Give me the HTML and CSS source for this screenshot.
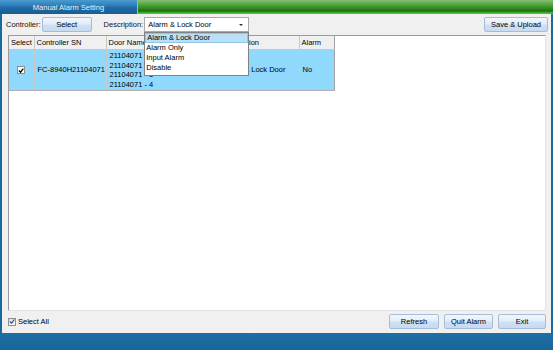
FILE: index.html
```html
<!DOCTYPE html>
<html>
<head>
<meta charset="utf-8">
<title>Manual Alarm Setting</title>
<link rel="stylesheet" href="styles.css">
</head>
<body>
<div class="app">
  <div class="titlebar">
    <div class="tab">Manual Alarm Setting</div>
    <div class="green"></div>
  </div>
  <div class="main">
    <div class="edge"></div>
    <div class="content">
      <div class="toolbar">
        <span class="label">Controller:</span>
        <button class="btn btn-select">Select</button>
        <span class="label label-desc">Description:</span>
        <div class="combo">
          <div class="combo-box"><span>Alarm &amp; Lock Door</span><span class="arrow"></span></div>
          <ul class="combo-list">
            <li class="active">Alarm &amp; Lock Door</li>
            <li>Alarm Only</li>
            <li>Input Alarm</li>
            <li>Disable</li>
          </ul>
        </div>
        <div class="spacer"></div>
        <button class="btn btn-save">Save &amp; Upload</button>
      </div>
      <div class="grid-wrap">
        <table class="grid">
          <colgroup>
            <col class="c-select"><col class="c-sn"><col class="c-door"><col class="c-desc"><col class="c-alarm">
          </colgroup>
          <thead>
            <tr><th>Select</th><th>Controller SN</th><th>Door Name</th><th>Description</th><th>Alarm</th></tr>
          </thead>
          <tbody>
            <tr class="sel">
              <td class="center"><span class="check"><svg width="7" height="7" viewBox="0 0 7 7"><path d="M1 3.5 L3 5.5 L6.2 1.2" fill="none" stroke="#000" stroke-width="1.4"/></svg></span></td>
              <td>FC-8940H21104071</td>
              <td class="doors">21104071 - 1<br>21104071 - 2<br>21104071 - 3<br>21104071 - 4</td>
              <td>Alarm &amp; Lock Door</td>
              <td>No</td>
            </tr>
          </tbody>
        </table>
      </div>
      <div class="bottombar">
        <label class="selall"><span class="check check-all"><svg width="7" height="7" viewBox="0 0 7 7"><path d="M1 3.5 L3 5.5 L6.2 1.2" fill="none" stroke="#2a3f8a" stroke-width="1.3"/></svg></span>Select All</label>
        <div class="spacer"></div>
        <button class="btn btn-refresh">Refresh</button>
        <button class="btn btn-quit">Quit Alarm</button>
        <button class="btn btn-exit">Exit</button>
      </div>
    </div>
    <div class="edge edge-right"></div>
  </div>
  <div class="footer"></div>
</div>
</body>
</html>
```
FILE: styles.css
```css
* { box-sizing: border-box; }
html, body { margin: 0; padding: 0; }
body {
  width: 553px;
  height: 350px;
  overflow: hidden;
  font-family: "Liberation Sans", Arial, sans-serif;
  font-size: 7.5px;
  color: #000;
  background: #1a6699;
}
.app { display: flex; flex-direction: column; height: 350px; }
.titlebar { height: 14px; display: flex; }
.tab {
  width: 138px;
  background: linear-gradient(#4a9bd0 0%, #2a7ab5 45%, #1c6aa5 55%, #1a5e92 100%);
  color: #eef5fc;
  font-size: 7.5px;
  display: flex; align-items: center; justify-content: center;
  border-right: 1px solid #9cc2a0;
  padding-top: 1px;
}
.green {
  flex: 1;
  background: linear-gradient(#86bf74 0%, #58a444 30%, #2f8a20 60%, #1b6e10 80%, #3aa82c 88%, #5cc24a 100%);
}
.main { flex: 1; display: flex; }
.edge { width: 2px; background: #1a6a9e; }
.edge-right { width: 2px; }
.content {
  flex: 1;
  background: #f0f0f0;
  display: flex; flex-direction: column;
  padding: 3px 3px 3px 4px;
}
.toolbar { display: flex; align-items: center; height: 15px; }
.label { color: #111; }
.label-desc { margin-left: 12px; }
.spacer { flex: 1; }
.btn {
  font-family: "Liberation Sans", Arial, sans-serif;
  font-size: 7.5px;
  color: #000;
  height: 15px;
  padding: 0;
  border: 1px solid #a7bcd6;
  border-radius: 2px;
  background: linear-gradient(#f2f7fd 0%, #e2edf9 45%, #cfe0f3 55%, #c6daf1 100%);
}
.btn-select { width: 50px; margin-left: 1px; }
.btn-save { width: 64px; }
.combo { position: relative; width: 105px; margin-left: 1px; height: 15px; }
.combo-box {
  height: 15px;
  border: 1px solid #a9a9a9;
  background: #fff;
  display: flex; align-items: center; justify-content: space-between;
  padding: 0 5px 0 3px;
}
.arrow {
  width: 0; height: 0;
  border-left: 2px solid transparent;
  border-right: 2px solid transparent;
  border-top: 2px solid #333;
}
.combo-list {
  position: absolute;
  left: 0; top: 15px;
  width: 105px;
  margin: 0; padding: 0 0 2px 0;
  list-style: none;
  background: #fff;
  border: 1px solid #828282;
  z-index: 5;
  color: #000;
}
.combo-list li { height: 10px; line-height: 10px; padding-left: 1px; color: #000; }
.combo-list li.active { background: #b9e0f6; border: 1px solid #8fc6e6; line-height: 8px; }
.grid-wrap {
  flex: 1;
  margin-top: 3px;
  margin-left: 2px;
  margin-right: 2px;
  background: #fff;
  border-top: 1px solid #9a9a9a;
  border-left: 1px solid #9a9a9a;
  border-right: 1px solid #e4e4e4;
  border-bottom: 1px solid #e4e4e4;
}
.grid {
  border-collapse: collapse;
  table-layout: fixed;
  width: 325px;
}
.c-select { width: 25px; }
.c-sn { width: 72px; }
.c-door { width: 113px; }
.c-desc { width: 80px; }
.c-alarm { width: 35px; }
.grid th {
  height: 13px;
  background: #f0f0f0;
  font-weight: normal;
  text-align: left;
  padding: 0 2px;
  border-right: 1px solid #c8c8c8;
  border-bottom: 1px solid #c8c8c8;
  white-space: nowrap;
  overflow: hidden;
}
.grid th:last-child { border-right: 1px solid #a0a0a0; }
.grid td {
  height: 41px;
  background: #91d9fc;
  padding: 0 3px;
  border-right: 1px solid #c8c8c8;
  border-bottom: 1px solid #b0b0b0;
  white-space: nowrap;
  overflow: hidden;
}
.grid td:last-child { border-right: 1px solid #a0a0a0; }
.grid td.doors { line-height: 9.5px; padding-top: 1px; }
.center { text-align: center; }
.check {
  display: inline-flex; align-items: center; justify-content: center;
  width: 8px; height: 8px;
  background: #fff;
  border: 1px solid #8e8f8f;
  vertical-align: middle;
}
.bottombar { display: flex; align-items: center; height: 17px; margin-top: 2px; padding-right: 2px; }
.selall { display: flex; align-items: center; margin-left: 2px; }
.check-all { margin-right: 2px; background: linear-gradient(#dde1e8, #f4f5f7); }
.btn-refresh { width: 50px; margin-right: 5px; }
.btn-quit { width: 49px; margin-right: 5px; }
.btn-exit { width: 48px; }
.footer {
  height: 17px;
  background: linear-gradient(#1f70a6, #17649a);
}
```
